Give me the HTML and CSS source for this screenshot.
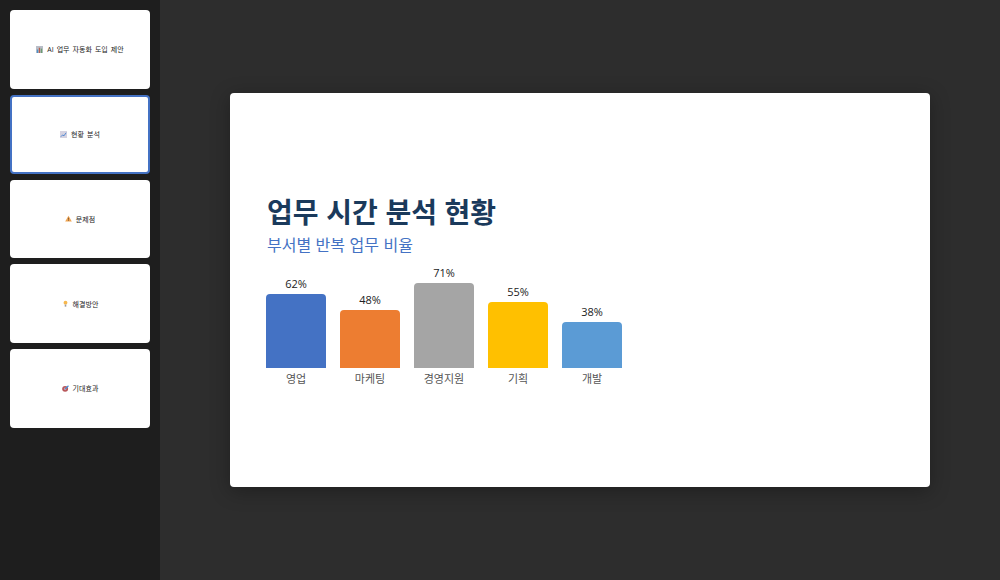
FILE: index.html
```html
<!DOCTYPE html>
<html lang="ko">

<head>
    <meta charset="UTF-8">
    <title>AI 업무 자동화 도입 제안</title>
    <link rel="stylesheet" href="styles.css">
</head>

<body>
    <div class="sidebar">
        <div class="thumb">
            <svg class="icon" viewBox="0 0 8 8"><rect width="8" height="8" fill="#b9bec8"/><rect x="1" y="4" width="1.5" height="4" fill="#4a90c8"/><rect x="3.2" y="2" width="1.5" height="6" fill="#b8604c"/><rect x="5.5" y="3" width="1.5" height="5" fill="#6a9e70"/></svg>
            <span>AI 업무 자동화 도입 제안</span>
        </div>
        <div class="thumb active">
            <svg class="icon" viewBox="0 0 8 8"><rect width="8" height="8" fill="#d5d2e0"/><path d="M1 6.5 3 4.5 4.5 5.5 7 2" fill="none" stroke="#3f7fd0" stroke-width="1"/></svg>
            <span>현황 분석</span>
        </div>
        <div class="thumb">
            <svg class="icon" viewBox="0 0 8 8"><path d="M4 .8 7.8 7.4H.2Z" fill="#f0a552"/><rect x="3.6" y="3" width=".8" height="2.4" fill="#5a4030"/><rect x="3.6" y="5.8" width=".8" height=".8" fill="#5a4030"/></svg>
            <span>문제점</span>
        </div>
        <div class="thumb">
            <svg class="icon" viewBox="0 0 8 8"><circle cx="4" cy="3" r="2.2" fill="#f7b84e"/><rect x="3.1" y="5.2" width="1.8" height="2.4" fill="#9a9aa0"/></svg>
            <span>해결방안</span>
        </div>
        <div class="thumb">
            <svg class="icon" viewBox="0 0 8 8"><circle cx="3.6" cy="4.4" r="3.4" fill="#b8565a"/><circle cx="3.6" cy="4.4" r="1.5" fill="#c9a0b0"/><path d="M3.6 4.4 7.4.8" stroke="#3f8fd8" stroke-width="1.4"/></svg>
            <span>기대효과</span>
        </div>
    </div>

    <div class="main">
        <div class="slide">
            <h1>업무 시간 분석 현황</h1>
            <h2>부서별 반복 업무 비율</h2>
            <div class="chart">
                <div class="col">
                    <span class="val">62%</span>
                    <div class="bar blue" style="height: 74px"></div>
                    <span class="name">영업</span>
                </div>
                <div class="col">
                    <span class="val">48%</span>
                    <div class="bar orange" style="height: 58px"></div>
                    <span class="name">마케팅</span>
                </div>
                <div class="col">
                    <span class="val">71%</span>
                    <div class="bar gray" style="height: 85px"></div>
                    <span class="name">경영지원</span>
                </div>
                <div class="col">
                    <span class="val">55%</span>
                    <div class="bar yellow" style="height: 66px"></div>
                    <span class="name">기획</span>
                </div>
                <div class="col">
                    <span class="val">38%</span>
                    <div class="bar sky" style="height: 46px"></div>
                    <span class="name">개발</span>
                </div>
            </div>
        </div>
    </div>
</body>
</html>
```

FILE: styles.css
```css
* {
    box-sizing: border-box;
}

html, body {
    height: 100%;
}

body {
    margin: 0;
    display: flex;
    overflow: hidden;
    background: #2d2d2d;
    font-family: "Open Sans", "Noto Sans CJK KR", sans-serif;
}

.sidebar {
    width: 160px;
    flex-shrink: 0;
    padding: 10px;
    display: flex;
    flex-direction: column;
    gap: 6px;
    background: #1e1e1e;
}

.thumb {
    height: 78.75px;
    flex-shrink: 0;
    display: flex;
    align-items: center;
    justify-content: center;
    gap: 4px;
    background: #fff;
    border-radius: 4px;
    font-size: 7px;
    word-spacing: 1.2px;
    color: #222;
}

.thumb.active {
    border: 2px solid #4472c4;
}

.icon {
    width: 7px;
    height: 7px;
}

.main {
    flex: 1;
    display: flex;
    align-items: center;
    justify-content: center;
}

.slide {
    width: 700px;
    height: 394px;
    padding: 0 36px;
    display: flex;
    flex-direction: column;
    justify-content: center;
    background: #fff;
    border-radius: 4px;
    box-shadow: 0 4px 20px rgba(0, 0, 0, 0.3);
}

h1 {
    margin: 0 0 3px 1px;
    font-size: 28px;
    line-height: 38px;
    font-weight: 700;
    word-spacing: 0.4px;
    color: #1a3a5c;
}

h2 {
    margin: 0 0 10px 1px;
    font-size: 16px;
    line-height: 22px;
    font-weight: 400;
    word-spacing: 0.3px;
    color: #4472c4;
}

.chart {
    display: flex;
    align-items: flex-end;
    gap: 14px;
    height: 120px;
    margin-bottom: 1px;
}

.col {
    width: 60px;
    display: flex;
    flex-direction: column;
    align-items: center;
}

.val {
    margin-bottom: 3px;
    font-size: 11px;
    line-height: 15px;
    color: #222;
}

.name {
    margin-top: 3px;
    font-size: 11px;
    line-height: 15px;
    color: #555;
}

.bar {
    width: 60px;
    border-radius: 4px 4px 0 0;
}

.blue { background: #4472c4; }
.orange { background: #ed7d31; }
.gray { background: #a5a5a5; }
.yellow { background: #ffc000; }
.sky { background: #5b9bd5; }
```
